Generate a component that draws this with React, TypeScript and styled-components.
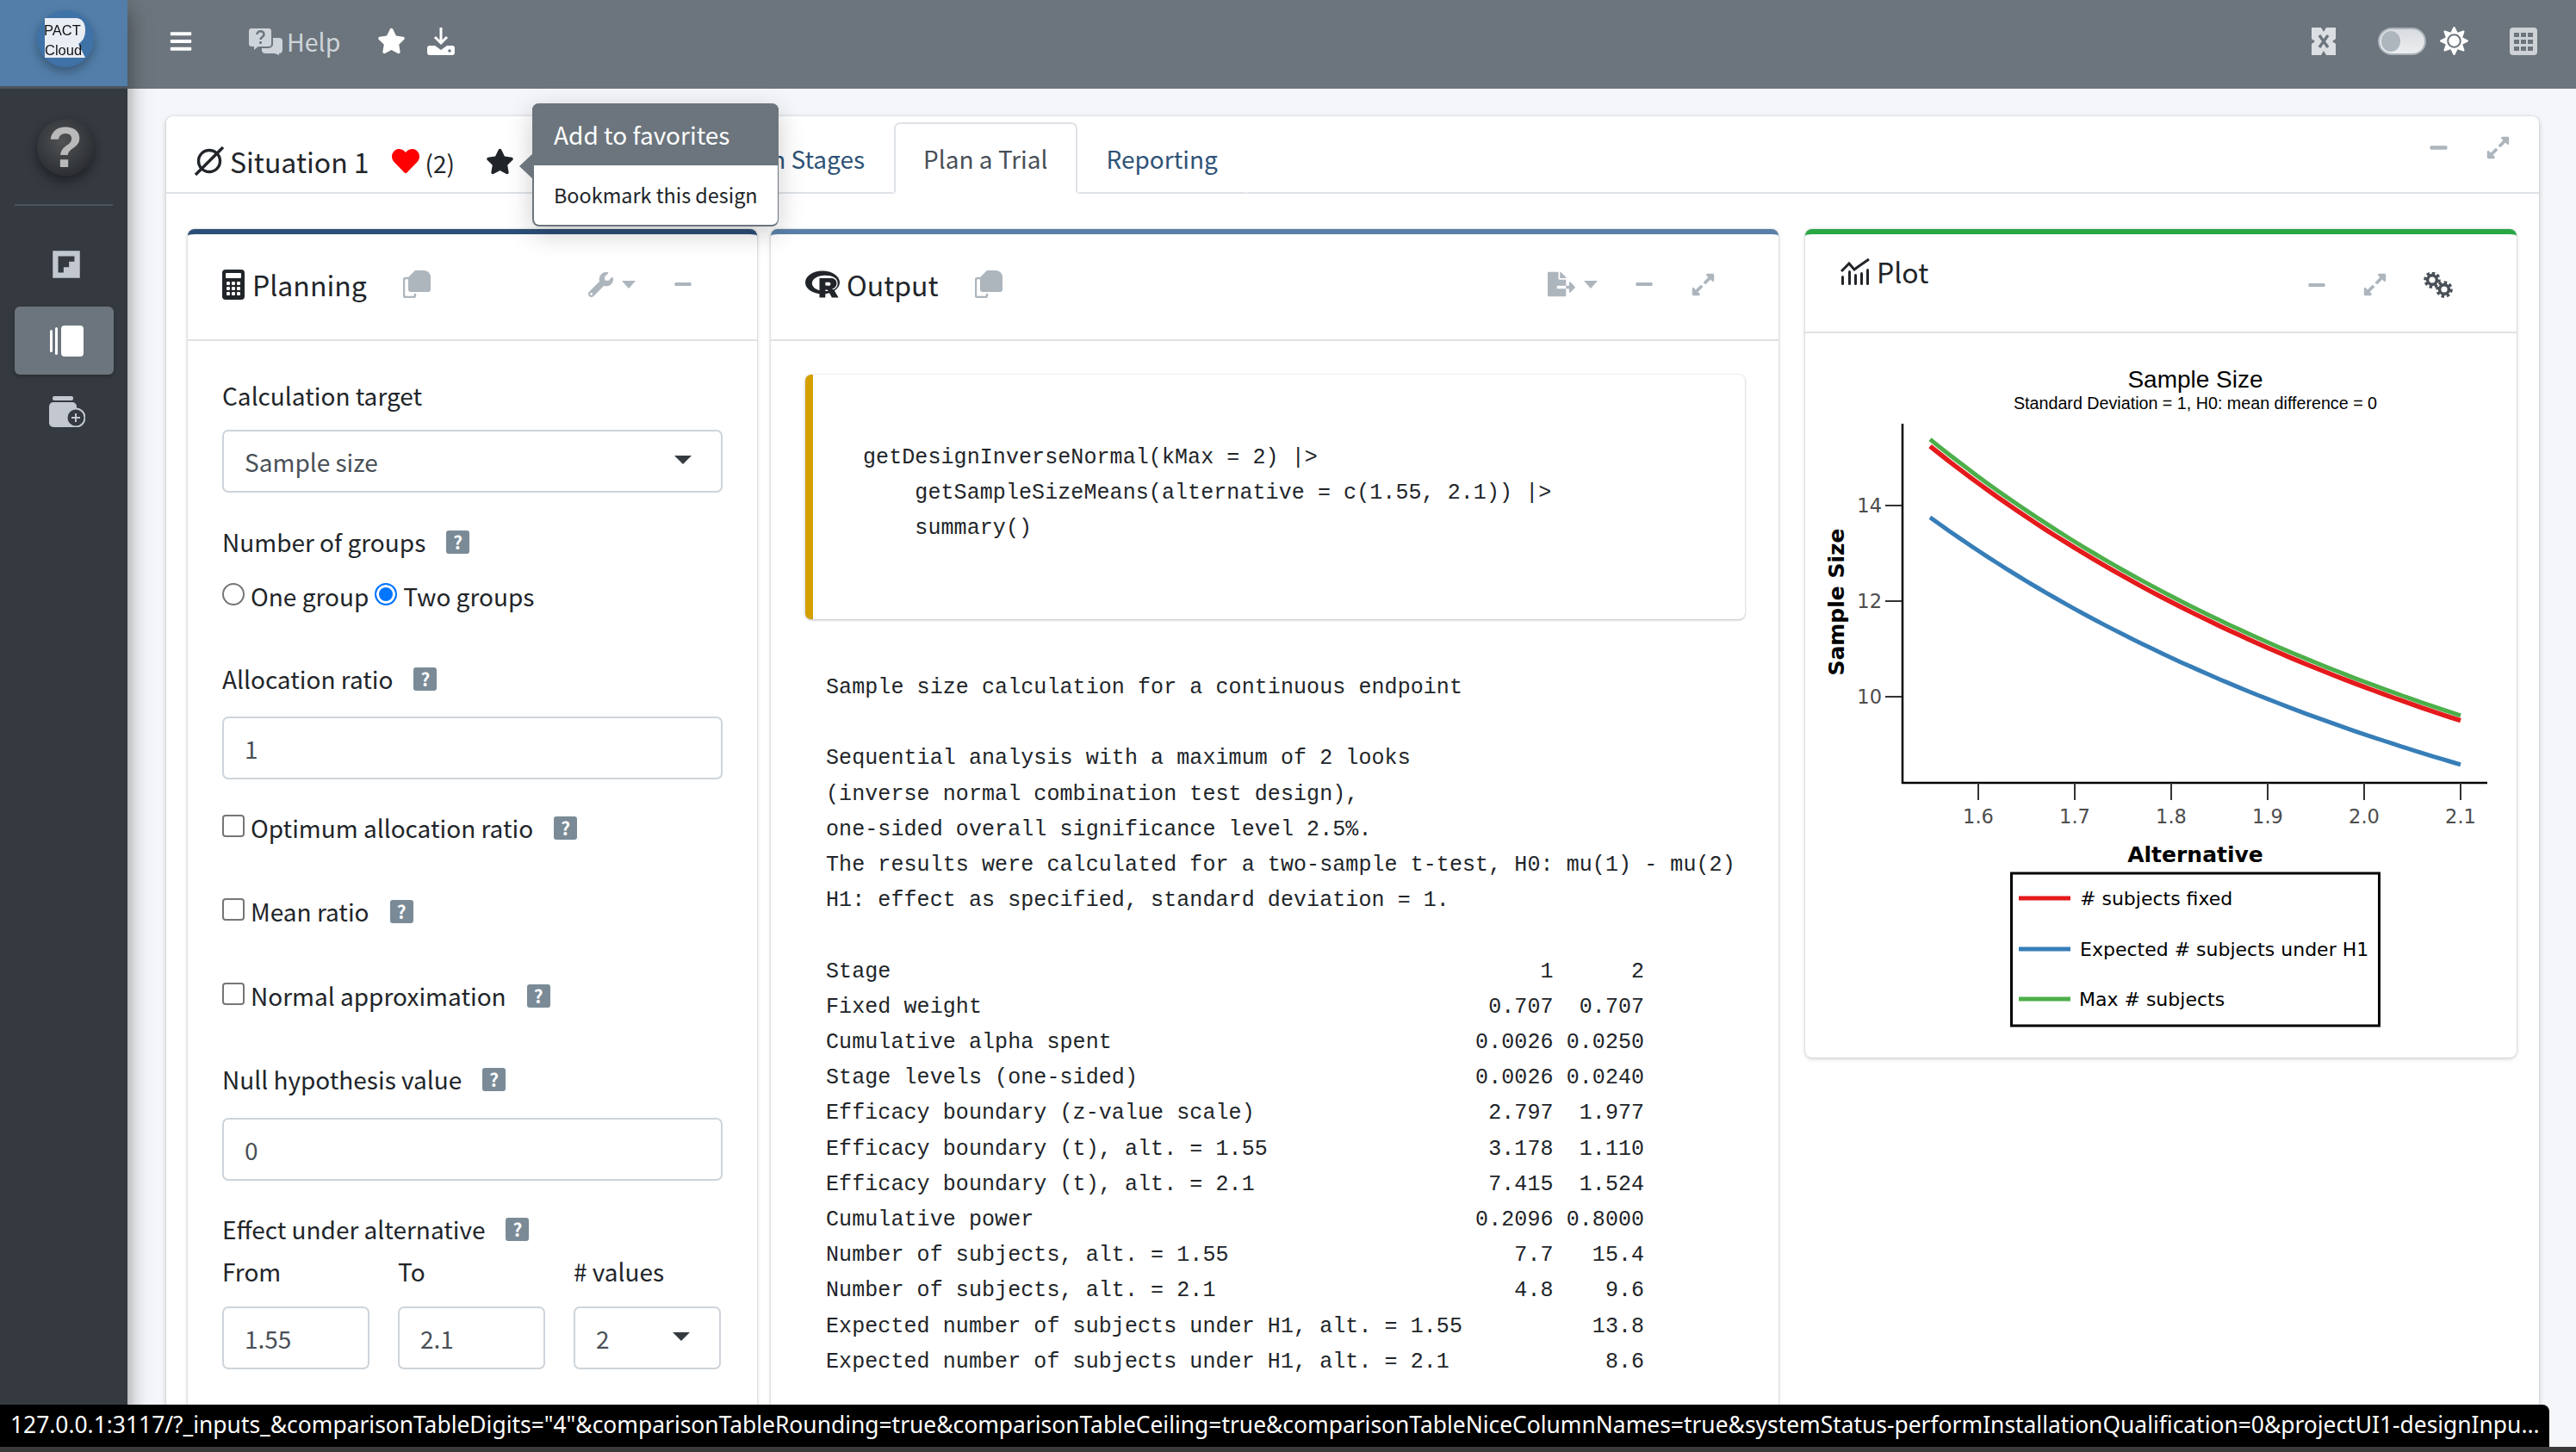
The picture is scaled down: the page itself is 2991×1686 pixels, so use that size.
import React from "react";
import styled, { createGlobalStyle } from "styled-components";
import {
  FaBars, FaStar, FaSun, FaHeart, FaRProject, FaWrench, FaMinus,
  FaExpandAlt, FaFileExport, FaFlipboard,
} from "react-icons/fa";

const Global = createGlobalStyle`
  html, body { margin: 0; padding: 0; background: #f4f6f9; }
  * { box-sizing: border-box; }
`;

const SANS = `"Noto Sans CJK SC", "Source Sans Pro", "Noto Sans", sans-serif`;
const MONO = `"Liberation Mono", "DejaVu Sans Mono", monospace`;
const PLOT = `"DejaVu Sans", sans-serif`;

const Page = styled.div`
  position: relative;
  width: 2991px;
  height: 1686px;
  overflow: hidden;
  display: flex;
  font-family: ${SANS};
  font-size: 28px;
  color: #212529;
  background: #f4f6f9;
`;

const Sidebar = styled.aside`
  flex: 0 0 148px;
  background: #343a40;
  box-shadow: 0 14px 28px rgba(0, 0, 0, 0.25), 0 10px 20px rgba(0, 0, 0, 0.22);
  z-index: 3;
  display: flex;
  flex-direction: column;
`;

const Brand = styled.div`
  height: 103px;
  background: #527ea9;
  border-bottom: 3px solid #4b545c;
  display: flex;
  justify-content: center;
  padding: 11px 0 0 4px;
`;

const LogoSvg = styled.svg`
  filter: drop-shadow(0 5px 6px rgba(0, 0, 0, 0.3));
`;

const HelpBall = styled.div`
  align-self: center;
  margin: 35px 0 0 4px;
  width: 66px;
  height: 66px;
  border-radius: 50%;
  background: radial-gradient(circle at 45% 40%, #505356 0%, #383b3e 50%, #1f2123 100%);
  box-shadow: 0 6px 14px rgba(0, 0, 0, 0.45);
  color: #b9b9b9;
  font-family: "Liberation Sans", sans-serif;
  font-weight: 700;
  font-size: 66px;
  line-height: 66px;
  text-align: center;
`;

const SideDivider = styled.div`
  height: 2px;
  margin: 33px 17px 0;
  background: #4b545c;
`;

const SideItem = styled.div<{ $active?: boolean; $mt: number }>`
  margin: ${(p) => p.$mt}px 16px 0 17px;
  height: 79px;
  padding-left: 4px;
  border-radius: 6px;
  display: flex;
  align-items: center;
  justify-content: center;
  color: #c2c7d0;
  background: ${(p) => (p.$active ? "#6c757d" : "transparent")};
  box-shadow: ${(p) => (p.$active ? "0 2px 4px rgba(0,0,0,.25)" : "none")};
`;

const Main = styled.main`
  flex: 1;
  min-width: 0;
  display: flex;
  flex-direction: column;
`;

const TopBar = styled.header`
  flex: 0 0 103px;
  background: #6c757d;
  display: flex;
  align-items: center;
  padding: 0 45px 8px 48px;
  color: #fff;
`;

const BarIcon = styled.span<{ $ml?: number; $color?: string }>`
  display: inline-flex;
  align-items: center;
  margin-left: ${(p) => p.$ml ?? 0}px;
  color: ${(p) => p.$color ?? "#fff"};
`;

const HelpText = styled.span`
  margin-left: 5px;
  font-size: 28.5px;
  color: #ced4da;
`;

const Spacer = styled.div`
  flex: 1;
`;

const Toggle = styled.div`
  width: 56px;
  height: 32px;
  margin-left: 49px;
  border-radius: 16px;
  background: linear-gradient(#d9dcdf, #eceef0);
  border: 2px solid #aab2b9;
  padding: 2px;
  &::before {
    content: "";
    display: block;
    width: 22px;
    height: 24px;
    border-radius: 50%;
    background: #adb5bd;
  }
`;

const Content = styled.div`
  flex: 1;
  padding: 32px 43px 0 45px;
  min-height: 0;
`;

const MainCard = styled.section`
  position: relative;
  height: 1700px;
  background: #fff;
  border-radius: 8px;
  box-shadow: 0 0 2px rgba(0, 0, 0, 0.125), 0 2px 6px rgba(0, 0, 0, 0.2);
`;

const MainHeader = styled.div`
  height: 90px;
  border-bottom: 2px solid #dee2e6;
  display: flex;
  align-items: center;
  padding: 16px 33px 0 32px;
`;

const TitleText = styled.span`
  font-size: 32px;
  margin-left: 6px;
  white-space: nowrap;
`;

const Count = styled.span`
  font-size: 28px;
  margin-left: 7px;
  padding-top: 4px;
`;

const Tabs = styled.nav`
  flex: 0 0 441px;
  align-self: flex-end;
  display: flex;
  justify-content: flex-end;
`;

const Tab = styled.div<{ $active?: boolean }>`
  align-self: flex-end;
  height: 83px;
  margin-bottom: -2px;
  padding: 0 32px;
  display: flex;
  align-items: center;
  white-space: nowrap;
  font-size: 28px;
  color: ${(p) => (p.$active ? "#495057" : "#2f5377")};
  background: #fff;
  border: 2px solid ${(p) => (p.$active ? "#dee2e6" : "transparent")};
  border-bottom-color: ${(p) => (p.$active ? "#fff" : "#dee2e6")};
  border-radius: 7px 7px 0 0;
`;

const HeaderTools = styled.div`
  display: flex;
  align-items: center;
  margin-top: -32px;
`;

const Popover = styled.div`
  position: absolute;
  left: 425px;
  top: -15px;
  width: 286px;
  height: 143px;
  border-radius: 8px;
  background: #fff;
  border: 2px solid #6c757d;
  border-top: none;
  border-right-width: 1px;
  box-shadow: 0 8px 30px rgba(0, 0, 0, 0.2);
  z-index: 5;
  &::before {
    content: "";
    position: absolute;
    left: -17px;
    top: 57px;
    border-style: solid;
    border-width: 16px 17px 16px 0;
    border-color: transparent #6c757d transparent transparent;
  }
`;

const PopTitle = styled.div`
  height: 72px;
  margin: 0 -1px 0 -2px;
  padding: 0 25px;
  display: flex;
  align-items: center;
  background: #6c757d;
  color: #fff;
  font-size: 28px;
  border-radius: 8px 8px 0 0;
`;

const PopBody = styled.div`
  padding: 14px 23px;
  font-size: 23.4px;
  line-height: 40px;
  white-space: nowrap;
`;

const Columns = styled.div`
  display: flex;
  align-items: flex-start;
  padding: 41px 26px 0 25px;
`;

const Panel = styled.div<{ $width: number; $ml?: number; $accent: string }>`
  flex: 0 0 ${(p) => p.$width}px;
  margin-left: ${(p) => p.$ml ?? 0}px;
  background: #fff;
  border-top: 6px solid ${(p) => p.$accent};
  border-radius: 8px;
  box-shadow: 0 0 3px rgba(0, 0, 0, 0.18), 0 2px 5px rgba(0, 0, 0, 0.14);
`;

const PanelHeader = styled.div<{ $h: number; $pr: number; $pl: number; $pb?: number; $pt?: number }>`
  height: ${(p) => p.$h}px;
  border-bottom: 2px solid #dfe2e5;
  display: flex;
  align-items: center;
  padding: ${(p) => p.$pt ?? 0}px ${(p) => p.$pr}px ${(p) => p.$pb ?? 0}px ${(p) => p.$pl}px;
`;

const PanelTitle = styled.span<{ $ml?: number }>`
  font-size: 32px;
  margin-left: ${(p) => p.$ml ?? 8}px;
`;

const Raised = styled.span`
  display: inline-flex;
  align-items: center;
  margin-top: -31px;
`;

const Tool = styled.span<{ $ml?: number; $color?: string }>`
  display: inline-flex;
  align-items: center;
  margin-left: ${(p) => p.$ml ?? 0}px;
  color: ${(p) => p.$color ?? "#adb5bd"};
`;

const Caret = styled.span<{ $ml: number }>`
  display: inline-block;
  margin-left: ${(p) => p.$ml}px;
  width: 0;
  height: 0;
  border-style: solid;
  border-width: 9px 8px 0;
  border-color: #adb5bd transparent transparent;
`;

const FormBody = styled.div`
  padding: 43px 40px 60px 40px;
  height: 1300px;
`;

const Line = styled.div<{ $mt?: number }>`
  height: 40px;
  margin-top: ${(p) => p.$mt ?? 0}px;
  display: flex;
  align-items: center;
  white-space: nowrap;
`;

const Help = styled.span`
  width: 27px;
  height: 27px;
  margin-left: 24px;
  border-radius: 3px;
  background: #7a8b97;
  color: #fff;
  font-size: 21px;
  font-weight: 700;
  line-height: 27px;
  text-align: center;
`;

const Field = styled.div<{ $mt: number }>`
  height: 73px;
  margin-top: ${(p) => p.$mt}px;
  padding: 0 24px;
  display: flex;
  align-items: center;
  background: #fff;
  border: 2px solid #ced4da;
  border-radius: 7px;
  color: #495057;
`;

const SelectArrow = styled.span`
  margin: -4px 10px 0 auto;
  width: 0;
  height: 0;
  border-style: solid;
  border-width: 10px 10px 0;
  border-color: #343a40 transparent transparent;
`;

const Triple = styled.div<{ $mt?: number }>`
  display: grid;
  grid-template-columns: 171px 171px 171px;
  column-gap: 33px;
  margin-top: ${(p) => p.$mt ?? 0}px;
`;

const Radio = styled.span<{ $checked?: boolean; $ml?: number }>`
  flex: none;
  width: 26px;
  height: 26px;
  margin: -4px 7px 0 ${(p) => p.$ml ?? 0}px;
  border-radius: 50%;
  border: ${(p) => (p.$checked ? "2px solid #0075ff" : "2px solid #767676")};
  background: ${(p) => (p.$checked ? "#0075ff" : "#fff")};
  box-shadow: ${(p) => (p.$checked ? "inset 0 0 0 3px #fff" : "none")};
`;

const Check = styled.span`
  flex: none;
  width: 26px;
  height: 26px;
  margin: -4px 7px 0 0;
  border-radius: 4px;
  border: 2px solid #767676;
  background: #fff;
`;

const OutputBody = styled.div`
  padding: 39px 39px 0 40px;
  height: 1300px;
`;

const CodeBox = styled.pre`
  margin: 0;
  height: 284px;
  padding: 76px 0 0 58px;
  border-left: 9px solid #d4a000;
  border-radius: 7px;
  background: #fff;
  box-shadow: 0 1px 3px rgba(0, 0, 0, 0.25), 0 0 2px rgba(0, 0, 0, 0.1);
  font-family: ${MONO};
  font-size: 25px;
  letter-spacing: 0.08px;
  line-height: 41px;
  color: #212529;
`;

const Result = styled.pre`
  margin: 59px 0 0 24px;
  font-family: ${MONO};
  font-size: 25px;
  letter-spacing: 0.08px;
  line-height: 41.2px;
  color: #212529;
`;

const PlotBody = styled.div`
  height: 841px;
  svg { display: block; }
`;

const StatusBar = styled.div`
  position: absolute;
  left: 0;
  top: 1631px;
  width: 2960px;
  height: 49px;
  padding: 0 0 0 12px;
  background: #000;
  border-radius: 0 8px 0 0;
  color: #fff;
  font-family: "Noto Sans", sans-serif;
  font-size: 26.4px;
  line-height: 46px;
  white-space: nowrap;
  overflow: hidden;
  z-index: 6;
`;

const BottomStrip = styled.div`
  position: absolute;
  left: 0;
  top: 1680px;
  width: 2991px;
  height: 6px;
  background: #3a3a3a;
  z-index: 6;
`;

/* ---------- drawn icons ---------- */
const LogoMark = () => (
  <LogoSvg width="68" height="68" viewBox="0 0 68 68">
    <circle cx="34" cy="34" r="33" fill="#3f72a6" />
    <path d="M10 10h36c7 0 11 5 11 14 0 8-3 13-8 16l8 16H10z" fill="#e9eef4" />
    <text x="9" y="30" fontFamily="Liberation Sans, sans-serif" fontSize="16.5" fill="#111">PACT</text>
    <text x="10" y="53" fontFamily="Liberation Sans, sans-serif" fontSize="16.5" fill="#111">Cloud</text>
  </LogoSvg>
);

const AlbumIcon = () => (
  <svg width="40" height="36" viewBox="0 0 40 36">
    <rect x="14" y="0" width="26" height="36" rx="4" fill="#fff" />
    <rect x="1" y="5" width="3" height="26" rx="1.5" fill="#fff" />
    <rect x="7" y="2" width="3" height="32" rx="1.5" fill="#fff" />
  </svg>
);

const JarPlus = () => (
  <svg width="44" height="36" viewBox="0 0 44 36">
    <rect x="6" y="0" width="24" height="5" rx="2" fill="#c2c7d0" />
    <rect x="2" y="7" width="32" height="29" rx="5" fill="#c2c7d0" />
    <circle cx="33" cy="25" r="10.5" fill="#343a40" stroke="#c2c7d0" strokeWidth="2" />
    <path d="M33 20v10M28 25h10" stroke="#c2c7d0" strokeWidth="2" />
  </svg>
);

const HelpBubbles = () => (
  <svg width="40" height="32" viewBox="0 0 40 32">
    <path d="M16 12h20a4 4 0 0 1 4 4v10a4 4 0 0 1-4 4v2l-5-2H20a4 4 0 0 1-4-4z" fill="#ced4da" />
    <path d="M4 0h20a4 4 0 0 1 4 4v15a4 4 0 0 1-4 4H12l-6 5v-5H4a4 4 0 0 1-4-4V4a4 4 0 0 1 4-4z" fill="#ced4da" stroke="#6c757d" strokeWidth="2" />
    <path d="M10.5 8c0-5 8-5 8 0 0 3-4 3-4 6M14.5 16v3" fill="none" stroke="#6c757d" strokeWidth="2.6" />
  </svg>
);

const DownloadIcon = () => (
  <svg width="32" height="32" viewBox="0 0 32 32">
    <path d="M16 0v17M9 11l7 7 7-7" fill="none" stroke="#fff" strokeWidth="3" />
    <path d="M3 21h6l7 5 7-5h6a3 3 0 0 1 3 3v5a3 3 0 0 1-3 3H3a3 3 0 0 1-3-3v-5a3 3 0 0 1 3-3z" fill="#fff" />
    <circle cx="26" cy="27" r="1.8" fill="#6c757d" />
  </svg>
);

const FullscreenIcon = () => (
  <svg width="28" height="32" viewBox="0 0 28 32">
    <rect width="28" height="32" fill="#dcdfe2" />
    <path d="M9 9l10 14M19 9L9 23" stroke="#6c757d" strokeWidth="3.4" />
    <path d="M11 0l3 5 3-5zM11 32l3-5 3 5zM0 13l4 3-4 3zM28 13l-4 3 4 3z" fill="#6c757d" />
  </svg>
);

const GridIcon = () => (
  <svg width="32" height="32" viewBox="0 0 32 32">
    <rect width="32" height="32" rx="4" fill="#ced2d6" />
    {[6, 14, 22].map((y) =>
      [5, 13, 21].map((x) => <rect key={`${x}-${y}`} x={x} y={y} width="6" height="5" fill="#6c757d" />)
    )}
  </svg>
);

const EmptySet = () => (
  <svg width="36" height="34" viewBox="0 0 36 34">
    <circle cx="18" cy="17" r="12.5" fill="none" stroke="#212529" strokeWidth="3.4" />
    <path d="M2 33L34 1" stroke="#212529" strokeWidth="3.4" />
  </svg>
);

const CalcIcon = () => (
  <svg width="26" height="35" viewBox="0 0 26 35">
    <rect width="26" height="35" rx="4" fill="#212529" />
    <rect x="4" y="4" width="18" height="6" rx="1" fill="#fff" />
    {[14, 20, 26].map((y) =>
      [5, 11, 17].map((x) => <rect key={`${x}-${y}`} x={x} y={y} width="4" height="4" rx="1.2" fill="#fff" />)
    )}
  </svg>
);

const CopyIcon = () => (
  <svg width="32" height="32" viewBox="0 0 32 32">
    <path d="M6 9H3a2 2 0 0 0-2 2v18a2 2 0 0 0 2 2h9a2 2 0 0 0 2-2v-2" fill="none" stroke="#adb5bd" strokeWidth="2.4" />
    <path d="M14 0h10c5 0 8 4 8 8v14a3 3 0 0 1-3 3H9a3 3 0 0 1-3-3V8z" fill="#adb5bd" />
  </svg>
);

const PlotIcon = () => (
  <svg width="34" height="31" viewBox="0 0 34 31">
    <path d="M1 15l9-9 6 7 4-3L33 1" fill="none" stroke="#212529" strokeWidth="3" />
    {[1, 9, 16, 23, 30].map((x, i) => (
      <rect key={x} x={x} y={[20, 14, 18, 16, 12][i]} width="3" height={31 - [20, 14, 18, 16, 12][i]} rx="1.5" fill="#212529" />
    ))}
  </svg>
);

const TwoGears = () => (
  <svg width="34" height="30" viewBox="0 0 34 30">
    {[[10, 9], [24, 20]].map(([cx, cy]) => (
      <g key={cx}>
        <circle cx={cx} cy={cy} r="8" fill="none" stroke="#495057" strokeWidth="3.6" strokeDasharray="3.4 2.8" />
        <circle cx={cx} cy={cy} r="5.4" fill="none" stroke="#495057" strokeWidth="3.6" />
      </g>
    ))}
  </svg>
);

/* ---------- plot ---------- */
const xOf = (a: number) => 2297 + ((a - 1.6) / 0.5) * 560;
const yOf = (v: number) => 809 - (v - 10) * 55.5;
const curve = (c: number, b: number) => {
  const pts: string[] = [];
  for (let i = 0; i <= 55; i++) {
    const a = 1.55 + (i / 55) * 0.55;
    pts.push(`${xOf(a).toFixed(1)},${yOf(c + b / (a * a)).toFixed(1)}`);
  }
  return pts.join(" ");
};

const Chart = () => (
  <svg width="826" height="841" viewBox="2096 387 826 841">
    <text x="2549" y="450" textAnchor="middle" fontFamily="Liberation Sans, sans-serif" fontSize="28" fill="#000">Sample Size</text>
    <text x="2549" y="475" textAnchor="middle" fontFamily="Liberation Sans, sans-serif" fontSize="19.7" fill="#000">Standard Deviation = 1, H0: mean difference = 0</text>
    <path d="M2209 492V909H2888" fill="none" stroke="#000" strokeWidth="2.5" />
    {[[14, 587], [12, 698], [10, 809]].map(([v, y]) => (
      <g key={v}>
        <path d={`M2189 ${y}H2208`} stroke="#333" strokeWidth="2" />
        <text x="2185" y={y + 8} textAnchor="end" fontFamily={PLOT} fontSize="22.5" fill="#4d4d4d">{v}</text>
      </g>
    ))}
    {[["1.6", 2297], ["1.7", 2409], ["1.8", 2521], ["1.9", 2633], ["2.0", 2745], ["2.1", 2857]].map(([l, x]) => (
      <g key={l as string}>
        <path d={`M${x} 909V929`} stroke="#333" strokeWidth="2" />
        <text x={x} y="956" textAnchor="middle" fontFamily={PLOT} fontSize="22.5" fill="#4d4d4d">{l}</text>
      </g>
    ))}
    <text x="2549" y="1001" textAnchor="middle" fontFamily={PLOT} fontWeight="700" fontSize="25" fill="#000">Alternative</text>
    <text transform="translate(2141 699) rotate(-90)" textAnchor="middle" fontFamily={PLOT} fontWeight="700" fontSize="25" fill="#000">Sample Size</text>
    <polyline points={curve(2.39, 27.3)} fill="none" stroke="#377eb8" strokeWidth="5" />
    <polyline points={curve(2.63, 30.3)} fill="none" stroke="#e41a1c" strokeWidth="5.5" />
    <polyline points={curve(2.69, 30.5)} fill="none" stroke="#4daf4a" strokeWidth="5" />
    <rect x="2335.5" y="1014" width="427" height="177" fill="#fff" stroke="#000" strokeWidth="3" />
    {[["# subjects fixed", 1043, "#e41a1c", 2415], ["Expected # subjects under H1", 1102, "#377eb8", 2415], ["Max # subjects", 1160, "#4daf4a", 2414]].map(([t, y, c, x]) => (
      <g key={t as string}>
        <path d={`M2344 ${y}H2404`} stroke={c as string} strokeWidth="5" />
        <text x={x} y={(y as number) + 8} fontFamily={PLOT} fontSize="22" fill="#000">{t}</text>
      </g>
    ))}
  </svg>
);

/* ---------- text ---------- */
const row = (l: string, a: string, b: string) => l.padEnd(50) + a.padStart(6) + " " + b.padStart(6);
const RESULT = [
  "Sample size calculation for a continuous endpoint",
  "",
  "Sequential analysis with a maximum of 2 looks",
  "(inverse normal combination test design),",
  "one-sided overall significance level 2.5%.",
  "The results were calculated for a two-sample t-test, H0: mu(1) - mu(2)",
  "H1: effect as specified, standard deviation = 1.",
  "",
  row("Stage", "1", "2"),
  row("Fixed weight", "0.707", "0.707"),
  row("Cumulative alpha spent", "0.0026", "0.0250"),
  row("Stage levels (one-sided)", "0.0026", "0.0240"),
  row("Efficacy boundary (z-value scale)", "2.797", "1.977"),
  row("Efficacy boundary (t), alt. = 1.55", "3.178", "1.110"),
  row("Efficacy boundary (t), alt. = 2.1", "7.415", "1.524"),
  row("Cumulative power", "0.2096", "0.8000"),
  row("Number of subjects, alt. = 1.55", "7.7", "15.4"),
  row("Number of subjects, alt. = 2.1", "4.8", "9.6"),
  row("Expected number of subjects under H1, alt. = 1.55", "", "13.8"),
  row("Expected number of subjects under H1, alt. = 2.1", "", "8.6"),
].join("\n");

const CODE = `getDesignInverseNormal(kMax = 2) |>
    getSampleSizeMeans(alternative = c(1.55, 2.1)) |>
    summary()`;

const URL_TEXT = `127.0.0.1:3117/?_inputs_&comparisonTableDigits="4"&comparisonTableRounding=true&comparisonTableCeiling=true&comparisonTableNiceColumnNames=true&systemStatus-performInstallationQualification=0&projectUI1-designInpu...`;

export default function App() {
  return (
    <Page>
      <Global />
      <Sidebar>
        <Brand><LogoMark /></Brand>
        <HelpBall>?</HelpBall>
        <SideDivider />
        <SideItem $mt={28}><FaFlipboard size={36} /></SideItem>
        <SideItem $mt={10} $active><AlbumIcon /></SideItem>
        <SideItem $mt={3}><JarPlus /></SideItem>
      </Sidebar>
      <Main>
        <TopBar>
          <BarIcon><FaBars size={28} /></BarIcon>
          <BarIcon $ml={64}><HelpBubbles /></BarIcon>
          <HelpText>Help</HelpText>
          <BarIcon $ml={43}><FaStar size={33} /></BarIcon>
          <BarIcon $ml={25}><DownloadIcon /></BarIcon>
          <Spacer />
          <BarIcon><FullscreenIcon /></BarIcon>
          <Toggle />
          <BarIcon $ml={16}><FaSun size={33} /></BarIcon>
          <BarIcon $ml={48}><GridIcon /></BarIcon>
        </TopBar>
        <Content>
          <MainCard>
            <MainHeader>
              <EmptySet />
              <TitleText>Situation 1</TitleText>
              <BarIcon $ml={26} $color="#f00"><FaHeart size={32} /></BarIcon>
              <Count>(2)</Count>
              <BarIcon $ml={36} $color="#212529"><FaStar size={33} /></BarIcon>
              <Tabs><Tab>Design Stages</Tab></Tabs>
              <Tab $active>Plan a Trial</Tab>
              <Tab>Reporting</Tab>
              <Spacer />
              <HeaderTools>
                <Tool><FaMinus size={23} /></Tool>
                <Tool $ml={43}><FaExpandAlt size={29} /></Tool>
              </HeaderTools>
            </MainHeader>
            <Popover>
              <PopTitle>Add to favorites</PopTitle>
              <PopBody>Bookmark this design</PopBody>
            </Popover>
            <Columns>
              <Panel $width={661} $accent="#2c4f78">
                <PanelHeader $h={124} $pl={40} $pr={75} $pb={6}>
                  <CalcIcon />
                  <PanelTitle $ml={9}>Planning</PanelTitle>
                  <Tool $ml={42}><CopyIcon /></Tool>
                  <Spacer />
                  <Tool><FaWrench size={29} /></Tool>
                  <Caret $ml={10} />
                  <Tool $ml={44}><FaMinus size={22} /></Tool>
                </PanelHeader>
                <FormBody>
                  <Line>Calculation target</Line>
                  <Field $mt={20}>Sample size<SelectArrow /></Field>
                  <Line $mt={37}>Number of groups<Help>?</Help></Line>
                  <Line $mt={23}>
                    <Radio />One group<Radio $checked $ml={7} />Two groups
                  </Line>
                  <Line $mt={56}>Allocation ratio<Help>?</Help></Line>
                  <Field $mt={24}>1</Field>
                  <Line $mt={36}><Check />Optimum allocation ratio<Help>?</Help></Line>
                  <Line $mt={57}><Check />Mean ratio<Help>?</Help></Line>
                  <Line $mt={58}><Check />Normal approximation<Help>?</Help></Line>
                  <Line $mt={57}>Null hypothesis value<Help>?</Help></Line>
                  <Field $mt={25}>0</Field>
                  <Line $mt={36}>Effect under alternative<Help>?</Help></Line>
                  <Triple $mt={9}>
                    <Line>From</Line>
                    <Line>To</Line>
                    <Line># values</Line>
                  </Triple>
                  <Triple>
                    <Field $mt={21}>1.55</Field>
                    <Field $mt={21}>2.1</Field>
                    <Field $mt={21}>2<SelectArrow /></Field>
                  </Triple>
                </FormBody>
              </Panel>
              <Panel $width={1170} $ml={16} $accent="#5a80a8">
                <PanelHeader $h={124} $pl={40} $pr={73} $pb={6}>
                  <FaRProject size={40} color="#212529" />
                  <PanelTitle>Output</PanelTitle>
                  <Tool $ml={42}><CopyIcon /></Tool>
                  <Spacer />
                  <Tool><FaFileExport size={32} /></Tool>
                  <Caret $ml={10} />
                  <Tool $ml={43}><FaMinus size={22} /></Tool>
                  <Tool $ml={43}><FaExpandAlt size={29} /></Tool>
                </PanelHeader>
                <OutputBody>
                  <CodeBox>{CODE}</CodeBox>
                  <Result>{RESULT}</Result>
                </OutputBody>
              </Panel>
              <Panel $width={826} $ml={31} $accent="#28a745">
                <PanelHeader $h={115} $pl={41} $pr={74} $pt={4}>
                  <Raised>
                    <PlotIcon />
                    <PanelTitle>Plot</PanelTitle>
                  </Raised>
                  <Spacer />
                  <Tool><FaMinus size={22} /></Tool>
                  <Tool $ml={42}><FaExpandAlt size={29} /></Tool>
                  <Tool $ml={42}><TwoGears /></Tool>
                </PanelHeader>
                <PlotBody><Chart /></PlotBody>
              </Panel>
            </Columns>
          </MainCard>
        </Content>
      </Main>
      <StatusBar>{URL_TEXT}</StatusBar>
      <BottomStrip />
    </Page>
  );
}
